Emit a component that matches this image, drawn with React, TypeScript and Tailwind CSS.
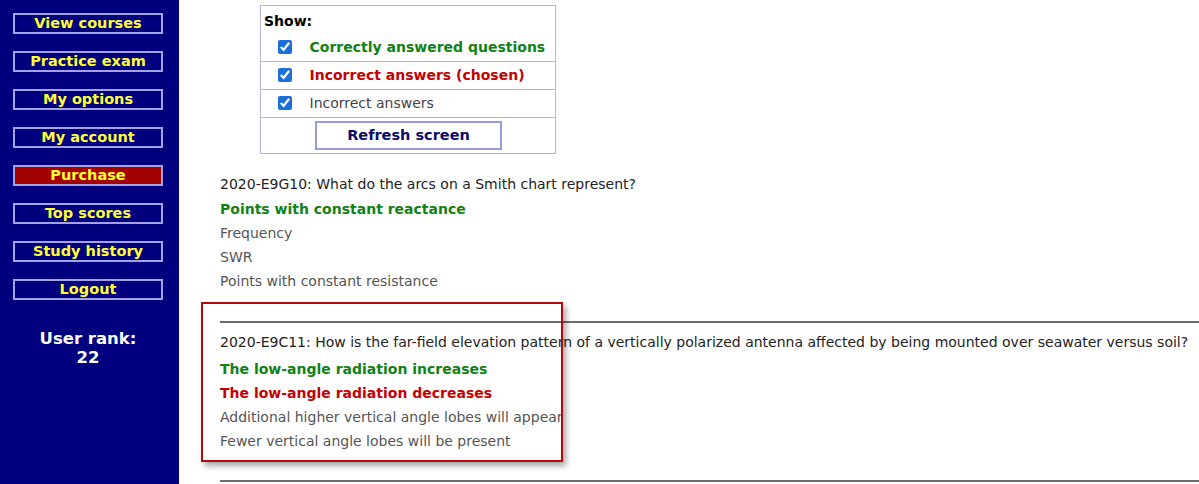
import React from "react";

const navItems = [
  { label: "View courses" },
  { label: "Practice exam" },
  { label: "My options" },
  { label: "My account" },
  { label: "Purchase", hot: true },
  { label: "Top scores" },
  { label: "Study history" },
  { label: "Logout" },
];

type Answer = { text: string; kind: "correct" | "chosen" | "other" };

const questions: { id: string; text: string; answers: Answer[] }[] = [
  {
    id: "2020-E9G10",
    text: "What do the arcs on a Smith chart represent?",
    answers: [
      { text: "Points with constant reactance", kind: "correct" },
      { text: "Frequency", kind: "other" },
      { text: "SWR", kind: "other" },
      { text: "Points with constant resistance", kind: "other" },
    ],
  },
  {
    id: "2020-E9C11",
    text: "How is the far-field elevation pattern of a vertically polarized antenna affected by being mounted over seawater versus soil?",
    answers: [
      { text: "The low-angle radiation increases", kind: "correct" },
      { text: "The low-angle radiation decreases", kind: "chosen" },
      { text: "Additional higher vertical angle lobes will appear", kind: "other" },
      { text: "Fewer vertical angle lobes will be present", kind: "other" },
    ],
  },
];

const answerClass = {
  correct: "font-bold text-[#118211]",
  chosen: "font-bold text-[#c40000]",
  other: "text-[#555]",
};

const App = () => {
  return (
    <div
      className="relative flex min-h-[484px] bg-white text-[14px]"
      style={{ fontFamily: '"DejaVu Sans", Verdana, sans-serif' }}
    >
      {/* left nav */}
      <aside className="w-[179px] shrink-0 bg-[#00007f] pt-[13px] flex flex-col items-start px-[13px]">
        <div className="flex flex-col gap-[17px]">
          {navItems.map((item) => (
            <div
              key={item.label}
              className={`w-[150px] h-[21px] border-2 border-[#a3a3e6] flex items-center justify-center text-[14.5px] font-bold text-[#ffff33] ${
                item.hot ? "bg-[#a50000]" : "bg-[#00007f]"
              }`}
            >
              {item.label}
            </div>
          ))}
        </div>
        <div className="w-[150px] mt-[29px] text-center text-white font-bold text-[16.5px] leading-[19px]">
          <div>User rank:</div>
          <div>22</div>
        </div>
      </aside>

      {/* main */}
      <main className="flex-1 pl-[41px] pt-[5px]">
        <table className="ml-[40px] w-[296px] border border-[#b3b3e3] border-collapse">
          <tbody>
            <tr>
              <td colSpan={2} className="h-[28px] pl-[3px] pt-[3px] font-bold text-black text-[14px] align-middle">
                Show:
              </td>
            </tr>
            {[
              { t: "Correctly answered questions", c: "font-bold text-[#118211]" },
              { t: "Incorrect answers (chosen)", c: "font-bold text-[#c40000]" },
              { t: "Incorrect answers", c: "text-[#444]" },
            ].map((r, i) => (
              <tr key={r.t} className={i > 0 ? "border-t border-[#b3b3e3]" : ""}>
                <td className="h-[28px] w-[49px] text-center align-middle">
                  <input type="checkbox" defaultChecked className="w-[14px] h-[14px] align-middle mt-[-2px] accent-[#1a6fd8]" />
                </td>
                <td className={`align-middle ${r.c}`}>{r.t}</td>
              </tr>
            ))}
            <tr className="border-t border-[#b3b3e3]">
              <td colSpan={2} className="h-[36px] pl-[54px] align-middle">
                <div className="w-[187px] h-[29px] border-2 border-[#9a9ae0] flex items-center justify-center font-bold text-[14.5px] text-[#0a0a6a]">
                  Refresh screen
                </div>
              </td>
            </tr>
          </tbody>
        </table>

        {questions.map((q, qi) => (
          <div key={q.id} className={qi === 0 ? "mt-[18px]" : "mt-[28px]"}>
            {qi > 0 && <div className="h-[2px] bg-[#6b6b6b] mb-[7px]" />}
            <div className="h-[24px] leading-[24px] text-[#222] whitespace-nowrap">
              {q.id}: {q.text}
            </div>
            <div className={qi === 0 ? "mt-[1px]" : "mt-[3px]"}>
              {q.answers.map((a) => (
                <div key={a.text} className={`h-[24px] leading-[24px] ${answerClass[a.kind]}`}>
                  {a.text}
                </div>
              ))}
            </div>
          </div>
        ))}
        <div className="h-[2px] bg-[#6b6b6b] mt-[27px]" />
      </main>

      {/* highlight annotation */}
      <div className="absolute left-[201px] top-[302px] w-[362px] h-[160px] border-2 border-[#b00a0a] shadow-[3px_4px_6px_rgba(0,0,0,0.35)] pointer-events-none" />
    </div>
  );
};

export default App;
